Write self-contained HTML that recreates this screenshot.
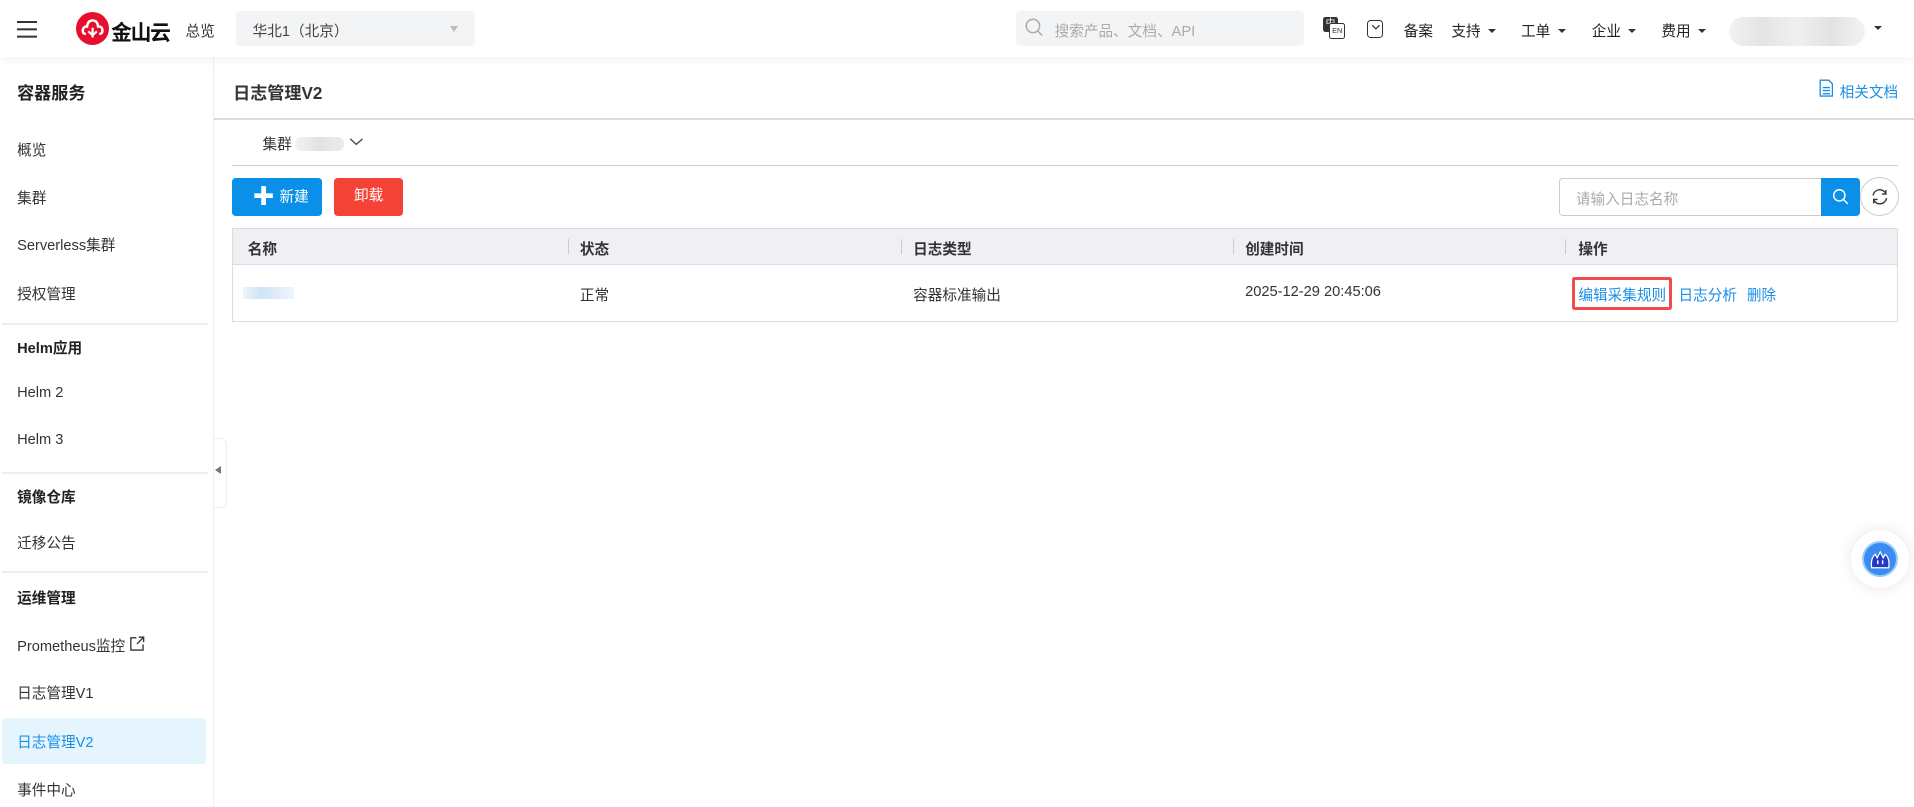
<!DOCTYPE html>
<html><head><meta charset="utf-8"><style>
*{box-sizing:border-box;margin:0;padding:0}
html,body{width:1914px;height:807px;overflow:hidden;background:#fff}
#w{zoom:1.2207;width:1568px;height:661px;position:relative;font-family:"Liberation Sans","Noto Sans CJK SC",sans-serif;font-size:12px;color:#333}
.a{position:absolute;white-space:nowrap}
.hdr{left:0;top:0;width:1568px;height:47px;background:#fff;box-shadow:0 2px 8px rgba(0,0,0,.06);z-index:2}
.side{left:0;top:47px;width:175px;height:614px;border-right:1px solid #eee}
.si{left:14px;font-size:12px;color:#333}
.sb{left:14px;font-weight:bold;color:#222}
.dv{left:2px;width:168px;height:1px;background:#eee}
.tri{display:inline-block;border-left:3.5px solid transparent;border-right:3.5px solid transparent;border-top:4px solid #333;margin-left:6px;vertical-align:2px}
.th{font-weight:bold;color:#333;top:195px}
.sep{top:196px;width:1px;height:12px;background:#ccc}
</style></head><body><div id="w">
<div class="a hdr">
 <div class="a" style="left:14px;top:17px;width:16px;height:1.6px;background:#333;box-shadow:0 6px 0 #333,0 12px 0 #333"></div>
 <div class="a" style="left:62px;top:10px;width:27px;height:27px;border-radius:50%;background:#e60f2d"></div>
 <svg class="a" style="left:66px;top:15px" width="19" height="17" viewBox="0 0 19 17"><path d="M4 13 Q1 13 1.5 9.5 Q2.5 6.5 5 7 Q5.5 2 9.5 2 Q13.5 2 14 7 Q17 6.5 17.5 9.5 Q18 13 15 13" fill="none" stroke="#fff" stroke-width="2"/><path d="M9.5 8 V16 M6 11 L9.5 14 L13 11" fill="none" stroke="#fff" stroke-width="1.8"/></svg>
 <div class="a" style="left:91px;top:13px;font-size:17px;font-weight:bold;color:#111;letter-spacing:-1px">金山云</div>
 <div class="a" style="left:152px;top:16px;font-size:12px;color:#333">总览</div>
 <div class="a" style="left:193px;top:9px;width:196px;height:29px;background:#f3f4f6;border-radius:3px"></div>
 <div class="a" style="left:207px;top:16px;color:#444">华北1（北京）</div>
 <div class="a" style="left:369px;top:21px;border-left:4px solid transparent;border-right:4px solid transparent;border-top:5px solid #bbb"></div>
 <div class="a" style="left:832px;top:9px;width:236px;height:29px;background:#f3f4f6;border-radius:3px"></div>
 <svg class="a" style="left:840px;top:15px" width="15" height="16"><circle cx="6.5" cy="6.5" r="5.5" fill="none" stroke="#aaa" stroke-width="1.2"/><path d="M10.5 10.5 L14 14.5" stroke="#aaa" stroke-width="1.2"/></svg>
 <div class="a" style="left:864px;top:16px;color:#aaa">搜索产品、文档、API</div>
 <div class="a" style="left:1084px;top:14px;width:12px;height:12px;background:#333;border-radius:2px;color:#fff;font-size:8px;line-height:12px;text-align:center">中</div>
 <div class="a" style="left:1089px;top:19px;width:13px;height:13px;border:1px solid #333;background:#fff;border-radius:2px;font-size:6px;line-height:11px;text-align:center">EN</div>
 <div class="a" style="left:1120px;top:16px;width:13px;height:15px;border:1.3px solid #333;border-radius:3px"></div>
 <svg class="a" style="left:1123px;top:20px" width="8" height="5"><path d="M1 1 L4 4 L7 1" fill="none" stroke="#333"/></svg>
 <div class="a" style="left:1150px;top:16px;color:#222">备案</div>
 <div class="a" style="left:1189px;top:16px;color:#222">支持<span class="tri"></span></div>
 <div class="a" style="left:1246px;top:16px;color:#222">工单<span class="tri"></span></div>
 <div class="a" style="left:1304px;top:16px;color:#222">企业<span class="tri"></span></div>
 <div class="a" style="left:1361px;top:16px;color:#222">费用<span class="tri"></span></div>
 <div class="a" style="left:1416px;top:14px;width:112px;height:24px;border-radius:12px;background:linear-gradient(90deg,#f2f2f2,#e4e4e4,#f0f0f0,#e2e2e2,#f3f3f3)"></div>
 <div class="a" style="left:1535px;top:21px;border-left:3.5px solid transparent;border-right:3.5px solid transparent;border-top:4px solid #333"></div>
</div>
<div class="a side"></div>
<div class="a" style="left:14px;top:65px;font-size:14px;font-weight:bold;color:#222">容器服务</div>
<div class="a si" style="top:114px">概览</div>
<div class="a si" style="top:153px">集群</div>
<div class="a si" style="top:192px">Serverless集群</div>
<div class="a si" style="top:232px">授权管理</div>
<div class="a dv" style="top:265px"></div>
<div class="a sb" style="top:276px">Helm应用</div>
<div class="a si" style="top:315px">Helm 2</div>
<div class="a si" style="top:354px">Helm 3</div>
<div class="a dv" style="top:387px"></div>
<div class="a sb" style="top:398px">镜像仓库</div>
<div class="a si" style="top:436px">迁移公告</div>
<div class="a dv" style="top:468px"></div>
<div class="a sb" style="top:481px">运维管理</div>
<div class="a si" style="top:520px">Prometheus监控 <svg width="13" height="13" style="vertical-align:-1px"><path d="M6 1.5 H1.5 V11.5 H11.5 V7 M8 1 H12 V5 M12 1 L6.5 6.5" fill="none" stroke="#333" stroke-width="1.1"/></svg></div>
<div class="a si" style="top:559px">日志管理V1</div>
<div class="a" style="left:2px;top:588px;width:167px;height:38px;background:#e5f4fd;border-radius:3px"></div>
<div class="a si" style="top:599px;color:#1a8fe6">日志管理V2</div>
<div class="a si" style="top:638px">事件中心</div>
<div class="a" style="left:175px;top:359px;width:11px;height:57px;background:#fff;border:1px solid #eee;border-left:none;border-radius:0 5px 5px 0"></div>
<div class="a" style="left:176px;top:382px;border-top:4px solid transparent;border-bottom:4px solid transparent;border-right:5px solid #777"></div>
<div class="a" style="left:191px;top:65px;font-size:14px;font-weight:bold;color:#333">日志管理V2</div>
<svg class="a" style="left:1490px;top:65px" width="12" height="15"><path d="M1 1 H8 L11 4 V14 H1 Z M3 7 H9 M3 9.5 H9 M3 12 H9" fill="none" stroke="#1a8fe6" stroke-width="1.1"/></svg>
<div class="a" style="left:1507px;top:66px;color:#1a8fe6">相关文档</div>
<div class="a" style="left:175px;top:97px;width:1393px;height:1px;background:#ddd"></div>
<div class="a" style="left:215px;top:109px;color:#333">集群</div>
<div class="a" style="left:242px;top:112px;width:40px;height:12px;border-radius:5px;background:linear-gradient(90deg,#f3f3f3,#e2e2e2,#ececec)"></div>
<svg class="a" style="left:286px;top:112px" width="12" height="8"><path d="M1 1.5 L6 6 L11 1.5" fill="none" stroke="#444" stroke-width="1.1"/></svg>
<div class="a" style="left:190px;top:135px;width:1365px;height:1px;background:#ccc"></div>
<div class="a" style="left:190px;top:146px;width:74px;height:31px;background:#0a90e8;border-radius:3px;color:#fff;font-size:12px;line-height:31px;padding-left:17px"><b style="font-size:18px;vertical-align:-2px;margin-right:4px">✚</b>新建</div>
<div class="a" style="left:274px;top:146px;width:56px;height:31px;background:#f44336;border-radius:3px;color:#fff;line-height:31px;text-align:center">卸载</div>
<div class="a" style="left:1277px;top:146px;width:216px;height:31px;border:1px solid #ccc;border-radius:3px 0 0 3px"></div>
<div class="a" style="left:1291px;top:154px;color:#aaa">请输入日志名称</div>
<div class="a" style="left:1492px;top:146px;width:32px;height:31px;background:#0a90e8;border-radius:0 3px 3px 0"></div>
<svg class="a" style="left:1501px;top:154px" width="14" height="14"><circle cx="6" cy="6" r="4.6" fill="none" stroke="#fff" stroke-width="1.2"/><path d="M9.3 9.3 L13 13" stroke="#fff" stroke-width="1.2"/></svg>
<div class="a" style="left:1524px;top:145px;width:32px;height:32px;border:1px solid #ccc;border-radius:50%"></div>
<svg class="a" style="left:1532px;top:153px" width="16" height="16"><path d="M2.5 7 A5.5 5.5 0 0 1 13 5.5 M13.5 9 A5.5 5.5 0 0 1 3 10.5" fill="none" stroke="#333" stroke-width="1.1"/><path d="M13 2.5 V5.8 H9.8 M3 13.5 V10.2 H6.2" fill="none" stroke="#333" stroke-width="1.1"/></svg>
<div class="a" style="left:190px;top:187px;width:1365px;height:77px;border:1px solid #ddd"></div>
<div class="a" style="left:191px;top:188px;width:1363px;height:29px;background:#efeff4;border-bottom:1px solid #ddd"></div>
<div class="a th" style="left:203px">名称</div>
<div class="a sep" style="left:465px"></div><div class="a th" style="left:475px">状态</div>
<div class="a sep" style="left:738px"></div><div class="a th" style="left:748px">日志类型</div>
<div class="a sep" style="left:1010px"></div><div class="a th" style="left:1020px">创建时间</div>
<div class="a sep" style="left:1282px"></div><div class="a th" style="left:1293px">操作</div>
<div class="a" style="left:199px;top:235px;width:42px;height:10px;background:linear-gradient(90deg,#eef5fd,#cfe3f8,#dfecfa,#eef5fd)"></div>
<div class="a" style="left:475px;top:233px">正常</div>
<div class="a" style="left:748px;top:233px">容器标准输出</div>
<div class="a" style="left:1020px;top:233px;line-height:14px;top:233px">2025-12-29 20:45:06</div>
<div class="a" style="left:1288px;top:227px;width:82px;height:27px;border:3px solid #f24b4b;border-radius:2px"></div>
<div class="a" style="left:1293px;top:233px;color:#1a8fe6">编辑采集规则</div>
<div class="a" style="left:1375px;top:233px;color:#1a8fe6">日志分析</div>
<div class="a" style="left:1431px;top:233px;color:#1a8fe6">删除</div>
<div class="a" style="left:1516px;top:434px;width:48px;height:48px;border-radius:50%;background:#fff;box-shadow:0 0 12px rgba(0,0,0,.1)"></div>
<div class="a" style="left:1525px;top:443px;width:30px;height:30px;border-radius:50%;background:#3b8cf0;border:2px solid #9cc8fa"></div>
<svg class="a" style="left:1530px;top:448px" width="20" height="20"><path d="M3 17 Q2 9 6 6 L7.5 9 L10 4 L12.5 9 L14 6 Q18 9 17 17 Z" fill="#2438c8" stroke="#fff" stroke-width="1"/><path d="M8 11 V14 M12 11 V14" stroke="#fff" stroke-width="1.2"/></svg>
</div></body></html>
